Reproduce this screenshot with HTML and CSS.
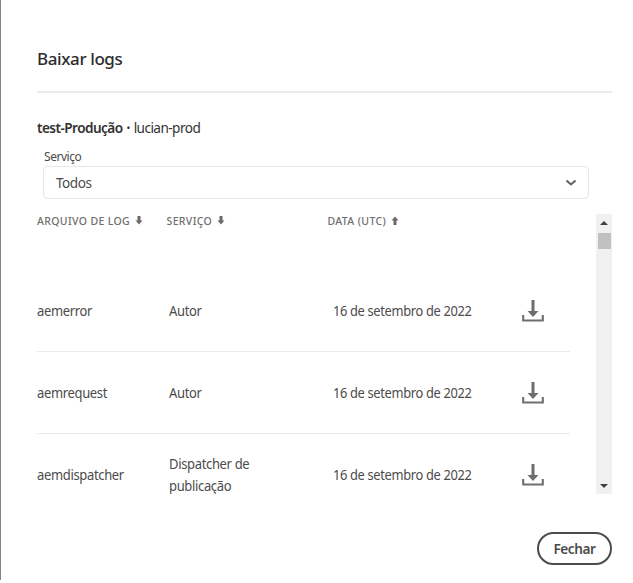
FILE: index.html
```html
<!DOCTYPE html>
<html lang="pt-BR">
<head>
<meta charset="utf-8">
<title>Baixar logs</title>
<link rel="stylesheet" href="styles.css">
</head>
<body>
<svg class="defs" aria-hidden="true">
  <symbol id="download" viewBox="0 0 22 22"><path d="M9.500 0h3v11h4L11 17 5.500 11h4z"/><path d="M1.200 15v5.500h19.600V15" fill="none" stroke="currentColor" stroke-width="2.100"/></symbol>
  <symbol id="arrow" viewBox="0 0 8 9"><path d="M2.500 0h3v4.500h2L4 8.500.5 4.500h2z"/></symbol>
</svg>
<main class="dialog">
  <h1 class="title">Baixar logs</h1>
  <p class="environment"><strong>test-Produção</strong><span class="dot">•</span><span>lucian-prod</span></p>
  <div class="label">Serviço</div>
  <div class="select"><span>Todos</span><svg class="chevron" viewBox="0 0 12 8"><path d="M1.500 1.500 6 5.500l4.500-4"/></svg></div>
  <section class="logs">
    <div class="table">
      <div class="row head">
        <div>ARQUIVO DE LOG<svg class="sort"><use href="#arrow"/></svg></div>
        <div>SERVIÇO<svg class="sort"><use href="#arrow"/></svg></div>
        <div>DATA (UTC)<svg class="sort up"><use href="#arrow"/></svg></div>
      </div>
      <div class="row"><div class="name">aemerror</div><div class="service">Autor</div><div class="date">16 de setembro de 2022</div><svg class="download"><use href="#download"/></svg></div>
      <div class="row"><div class="name">aemrequest</div><div class="service">Autor</div><div class="date">16 de setembro de 2022</div><svg class="download"><use href="#download"/></svg></div>
      <div class="row"><div class="name">aemdispatcher</div><div class="service">Dispatcher de<br>publicação</div><div class="date">16 de setembro de 2022</div><svg class="download"><use href="#download"/></svg></div>
    </div>
    <div class="scrollbar"><i class="tri"></i><i class="thumb"></i><i class="tri down"></i></div>
  </section>
  <button class="close">Fechar</button>
</main>
</body>
</html>
```
FILE: styles.css
```css
* { box-sizing: border-box; }
body { margin: 0; background: #fff; height: 583px; overflow: hidden; }
.defs { position: absolute; width: 0; height: 0; }
.dialog {
  display: flex; flex-direction: column;
  height: 580px; padding: 42px 21px 0 36px;
  border-left: 1px solid #858585;
  font: 13.6px/22px "Noto Sans", sans-serif;
  letter-spacing: -.35px;
  color: #4b4b4b;
}
.title {
  height: 51px; margin: 0; padding-top: 5px;
  border-bottom: 2px solid #eaeaea;
  font-size: 17px; line-height: 24px; font-weight: 500; letter-spacing: -.4px; color: #2c2c2c;
}
.environment { display: flex; height: 22px; margin: 24px 0 0; letter-spacing: -.55px; color: #323232; }
.environment strong { font-weight: 600; }
.dot { width: 11px; text-align: center; font-size: 10px; }
.label { margin: 9px 0 0 7px; height: 18px; font-size: 12px; line-height: 17px; letter-spacing: -.45px; }
.select {
  display: flex; align-items: center; justify-content: space-between;
  width: 546px; height: 33px; margin-left: 6px; padding: 0 11px 0 12px;
  border: 1px solid #e6e6e6; border-radius: 4px; letter-spacing: -.5px;
}
.chevron { width: 12px; height: 8px; fill: none; stroke: #606060; stroke-width: 2; }
.logs { display: flex; justify-content: space-between; height: 280px; margin-top: 15px; }
.table { width: 533px; overflow: hidden; }
.row {
  display: grid; grid-template-columns: 129.5px 161px 194.5px 1fr; align-items: center;
  height: 82px; border-bottom: 1px solid #eaeaea;
}
.row.head {
  height: 56px; border: 0; align-items: start; padding-top: 1px;
  font-size: 10.5px; line-height: 13px; font-weight: 500; letter-spacing: .36px; color: #6e6e6e;
}
.sort { width: 8px; height: 9px; margin-left: 5px; fill: #6a6a6a; }
.up { transform: rotate(180deg); }
.name, .service, .date { transform: scaleX(.955); transform-origin: left; }
.service { margin-left: 2px; }
.date { margin-left: 5.500px; transform: scaleX(.945); }
.download { width: 22px; height: 22px; fill: #6e6e6e; color: #6e6e6e; }
.scrollbar {
  display: flex; flex-direction: column; align-items: center;
  width: 16px; height: 280px; padding: 7px 0 6px; background: #f0f0f0;
}
.tri { border: 4px solid transparent; border-top: 0; border-bottom-color: #404040; }
.thumb { width: 13px; height: 16px; margin-top: 8px; background: #c1c1c1; }
.down { margin-top: auto; transform: rotate(180deg); }
.close {
  align-self: flex-end; width: 75px; height: 33px; margin-top: 38px; padding: 0;
  border: 2px solid #4b4b4b; border-radius: 17px; background: #fff;
  font: inherit; font-weight: 600; letter-spacing: -.4px; color: #4b4b4b;
}
```
